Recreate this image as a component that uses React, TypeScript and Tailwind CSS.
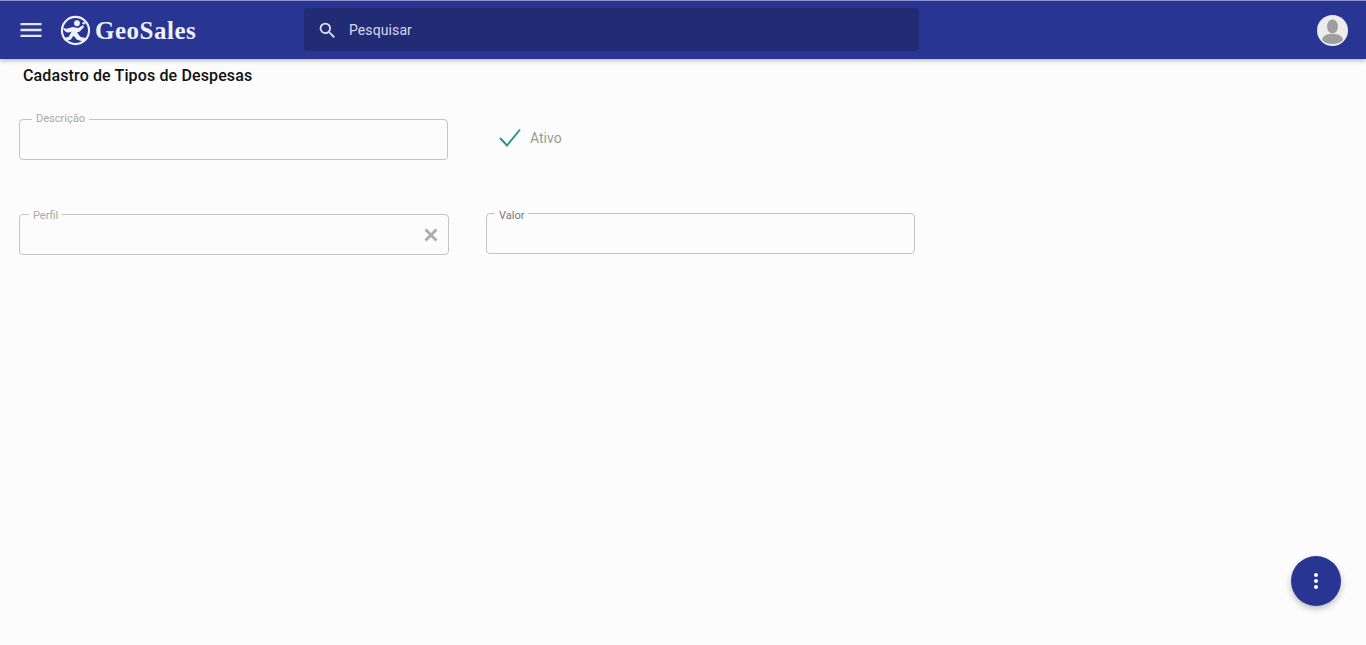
import React from 'react';
import { X } from 'lucide-react';
import { MdMenu, MdSearch, MdMoreVert } from 'react-icons/md';

const Logo = () => (
  <svg viewBox="0 0 32 32" className="h-[31px] w-[31px] shrink-0" fill="none">
    <circle cx="16" cy="16" r="14" stroke="#eef0fa" strokeWidth="2.2" />
    <circle cx="17.5" cy="8.5" r="3" fill="#eef0fa" />
    <circle cx="24.5" cy="8.5" r="1.4" fill="#eef0fa" />
    <path d="M3 12.5 C6 16 9 13.5 13 12.5 L19 13.5 L23.5 10.5 L25 12 L20.5 17 L17.5 18 L21 22.5 L27 24 L25 27.5 L17.5 25.5 L14 21.5 L11 25.5 L5 26.5 L3.5 24 L9 22.5 L12 17 C8 19.5 4 18 3 12.5 Z" fill="#eef0fa" />
  </svg>
);

const Field = ({ label, legendClass, className, children }: { label: string; legendClass: string; className: string; children?: React.ReactNode }) => (
  <div className={`relative h-[41px] rounded-[4px] border border-[#c4c4c4] ${className}`}>
    <span className={`absolute bg-[#fcfcfc] px-1 text-[11px] leading-[13px] ${legendClass}`}>{label}</span>
    {children}
  </div>
);

const App = () => {
  return (
    <div className="relative h-[645px] w-full overflow-hidden bg-[#fcfcfc] font-['Roboto',sans-serif]">
      <header className="flex h-[59px] items-center border-t border-[#8f95d0] bg-[#283593] shadow-[0_2px_4px_rgba(0,0,0,0.25)]">
        <MdMenu className="ml-[17px] h-[28px] w-[28px] text-[#e4e6f5]" />
        <div className="ml-[15px] flex w-[244px] items-center">
          <Logo />
          <span className="ml-[4px] font-['Liberation_Serif',serif] text-[25px] font-bold leading-none tracking-[0.5px] text-[#eef0fa]">GeoSales</span>
        </div>
        <div className="mb-[2px] flex h-[43px] w-[615px] items-center rounded-[4px] bg-[#212c74]">
          <MdSearch className="ml-[13px] mt-[2px] h-[21px] w-[21px] text-[#dfe2f3]" />
          <span className="ml-[11px] mt-[2px] text-sm tracking-[0.1px] text-[#d5d8ee]">Pesquisar</span>
        </div>
        <div className="ml-auto mr-[18px] flex h-[31px] w-[31px] items-center justify-center overflow-hidden rounded-full bg-[#ececec]">
          <svg viewBox="0 0 31 31" className="h-[31px] w-[31px]">
            <ellipse cx="15.5" cy="11.5" rx="5.5" ry="7" fill="#9e9e9e" />
            <path d="M5 25 C6 20 10 19 15.5 19 C21 19 25 20 26 25 C23 28 19 29 15.5 29 C12 29 8 28 5 25 Z" fill="#9e9e9e" />
          </svg>
        </div>
      </header>

      <main className="px-[19px]">
        <h1 className="ml-1 mt-[8px] text-[16px] font-medium leading-[18px] tracking-[0.13px] text-[#111111]">
          Cadastro de Tipos de Despesas
        </h1>

        <div className="mt-[34px] flex items-center">
          <Field label="Descrição" legendClass="left-[12px] top-[-8px] text-[#a8a8a8]" className="w-[429px]" />
          <div className="mb-[4px] ml-[51px] flex items-center">
            <svg viewBox="0 0 22 20" className="h-[20px] w-[22px]" fill="none">
              <path d="M1 10 L8 17.5 L21 1.5" stroke="#26938a" strokeWidth="1.9" />
            </svg>
            <span className="ml-[9px] text-sm text-[#9a9a9a]">Ativo</span>
          </div>
        </div>

        <div className="mt-[53px] flex items-start">
          <Field label="Perfil" legendClass="left-[9px] top-[-6px] text-[#a8a8a8]" className="mt-px w-[430px]">
            <X className="absolute right-[6px] top-[9px] h-[22px] w-[22px] text-[#ababab]" strokeWidth={3} strokeLinecap="butt" />
          </Field>
          <Field label="Valor" legendClass="left-[8px] top-[-5px] text-[#777777]" className="ml-[37px] w-[429px]" />
        </div>
      </main>

      <button className="absolute left-[1291px] top-[556px] flex h-[50px] w-[50px] items-center justify-center rounded-full bg-[#283593] shadow-[0_3px_6px_rgba(0,0,0,0.25)]">
        <MdMoreVert className="h-[24px] w-[24px] text-white" />
      </button>
    </div>
  );
};

export default App;
